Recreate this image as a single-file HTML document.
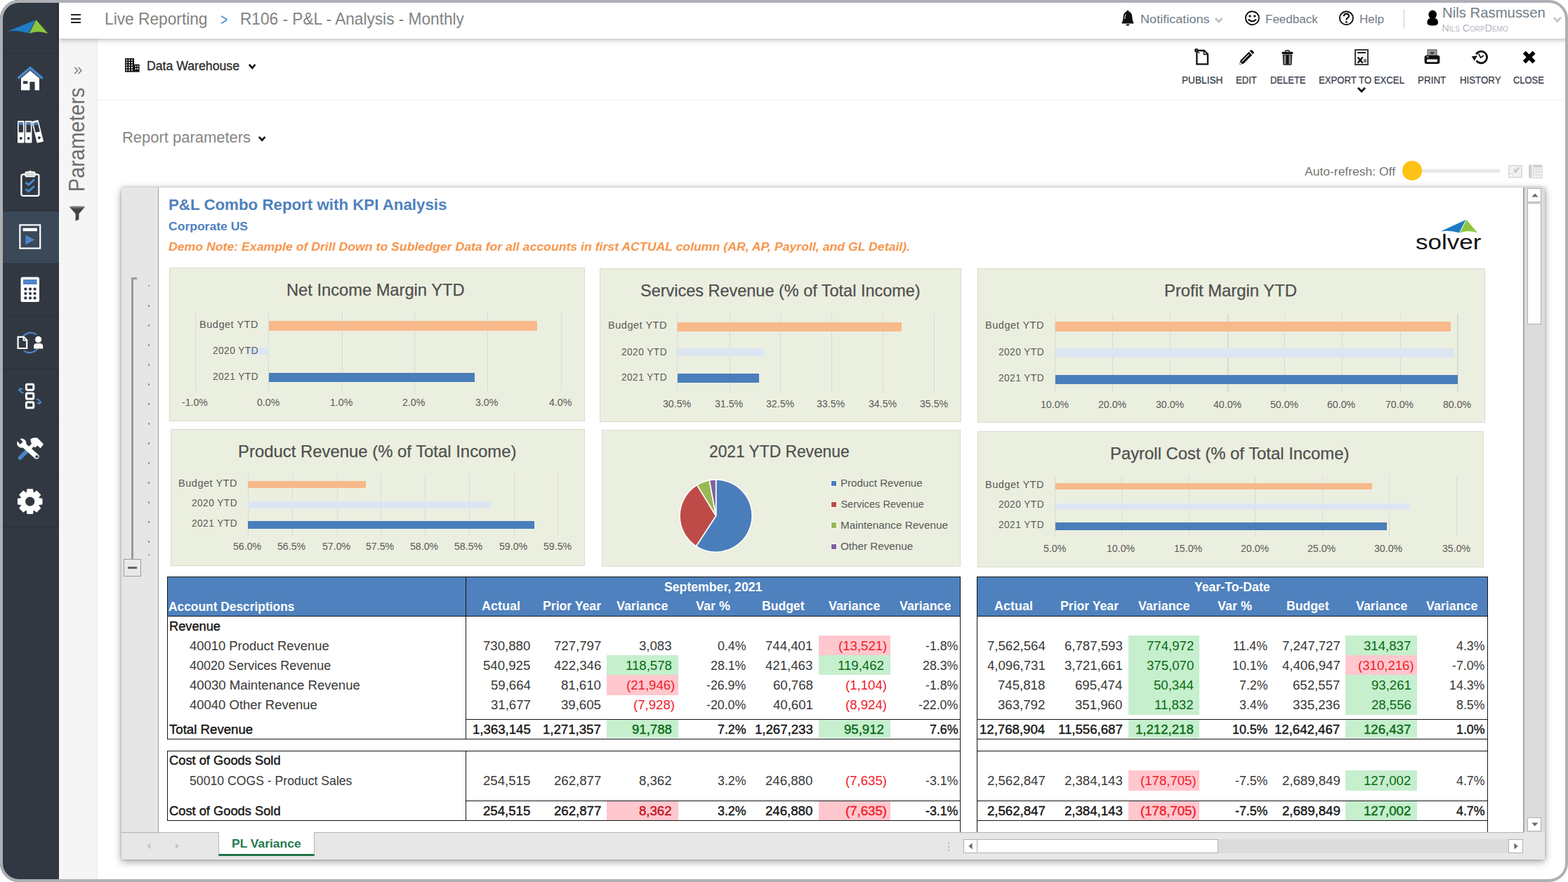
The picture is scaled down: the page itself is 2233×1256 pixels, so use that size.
<!DOCTYPE html>
<html lang="en"><head><meta charset="utf-8"><title>R106 - P&amp;L - Analysis - Monthly</title>
<style>
html,body{margin:0;padding:0;background:#fff;}
body{width:2233px;height:1256px;overflow:hidden;position:relative;font-family:"Liberation Sans", sans-serif;}
#f{position:absolute;left:0;top:0;width:2233px;height:1256px;box-sizing:border-box;border-radius:27px;overflow:hidden;background:#fff;}
#f div,#f span,#f svg{position:absolute;}
#f nav,#f aside,#f section,#f header,#f main{position:absolute;left:0;top:0;width:0;height:0;}
#f span{white-space:nowrap;line-height:1;transform-origin:0 50%;}
#fb{position:absolute;left:0;top:0;width:2233px;height:1256px;box-sizing:border-box;border:4px solid #aeb0b5;border-radius:27px;pointer-events:none;}
</style></head>
<body>
<div id="f">
<nav class="sidebar" aria-label="Main navigation">
<div style="left:0px;top:0px;width:84px;height:1256px;background:#313842;"></div>
<div style="left:4px;top:75px;width:80px;height:1px;background:#29303a;"></div>
<div style="left:4px;top:150px;width:80px;height:1px;background:#29303a;"></div>
<div style="left:4px;top:225px;width:80px;height:1px;background:#29303a;"></div>
<div style="left:4px;top:300px;width:80px;height:1px;background:#29303a;"></div>
<div style="left:4px;top:375px;width:80px;height:1px;background:#29303a;"></div>
<div style="left:4px;top:450px;width:80px;height:1px;background:#29303a;"></div>
<div style="left:4px;top:525px;width:80px;height:1px;background:#29303a;"></div>
<div style="left:4px;top:600px;width:80px;height:1px;background:#29303a;"></div>
<div style="left:4px;top:675px;width:80px;height:1px;background:#29303a;"></div>
<div style="left:4px;top:750px;width:80px;height:1px;background:#29303a;"></div>
<div style="left:4px;top:301px;width:80px;height:74px;background:#3b4858;"></div>
<svg style="left:8px;top:22px;" width="66" height="30" viewBox="0 0 66 30"><path d="M3 22.6 L42.6 6.4 L32.6 25.6 Q19 20.6 3 22.6Z" fill="#1f7bc4"/><path d="M43.4 6.2 L60.4 25.8 Q46 20.6 33.6 25.8Z" fill="#8cc63f"/></svg>
<svg style="left:22px;top:92px;" width="42" height="40" viewBox="0 0 42 40"><path d="M3.6 19.6 L21 4.6 L38.4 19.6" fill="none" stroke="#4a86c8" stroke-width="3.6" stroke-linejoin="miter"/><path d="M8 19.4 L21 8.4 L34 19.4 V36.6 H27.6 V24.6 H20.4 V36.6 H8Z" fill="#fff"/><rect x="11" y="23.4" width="6.4" height="4" fill="#313842"/></svg>
<svg style="left:22px;top:168px;" width="44" height="40" viewBox="0 0 44 40"><rect x="3" y="4" width="9.6" height="31.6" rx="1" fill="#fff"/><rect x="13.8" y="4" width="9.6" height="31.6" rx="1" fill="#fff"/><g transform="rotate(-14 32 20)"><rect x="27" y="3.4" width="9.6" height="31.6" rx="1" fill="#fff"/><rect x="28.6" y="6" width="6.4" height="14" fill="#313842"/><rect x="28.6" y="6" width="6.4" height="3.4" fill="#4a86c8"/><circle cx="31.8" cy="28.4" r="2" fill="#313842"/></g><rect x="4.6" y="6.4" width="6.4" height="14" fill="#313842"/><rect x="4.6" y="6.4" width="6.4" height="3.4" fill="#4a86c8"/><circle cx="7.8" cy="29" r="2" fill="#313842"/><rect x="15.4" y="6.4" width="6.4" height="14" fill="#313842"/><rect x="15.4" y="6.4" width="6.4" height="3.4" fill="#4a86c8"/><circle cx="18.6" cy="29" r="2" fill="#313842"/></svg>
<svg style="left:26px;top:240px;" width="34" height="42" viewBox="0 0 34 42"><rect x="4.4" y="8.4" width="25" height="30.4" rx="2.4" fill="none" stroke="#fff" stroke-width="2.2"/><rect x="10" y="4.6" width="14" height="7" rx="2.4" fill="#d9d9d9" stroke="#fff" stroke-width="1.4"/><circle cx="17" cy="4.6" r="1.8" fill="#fff"/><path d="M10.6 19.6 L14.6 23.2 L23 15.6 M10.6 29 L14.6 32.6 L23 25" fill="none" stroke="#4a86c8" stroke-width="3"/></svg>
<svg style="left:25px;top:317px;" width="36" height="40" viewBox="0 0 36 40"><rect x="3.4" y="3.4" width="28.8" height="33.2" fill="none" stroke="#fff" stroke-width="2.2"/><rect x="7.6" y="7.8" width="20.4" height="4.4" fill="#fff"/><path d="M11.4 17.4 L24.4 24.4 L11.4 31.4Z" fill="#4a86c8"/></svg>
<svg style="left:27px;top:392px;" width="32" height="40" viewBox="0 0 32 40"><rect x="2.6" y="2.4" width="26.4" height="35.6" rx="2.6" fill="#fff"/><rect x="6" y="6" width="19.6" height="7" fill="#4a86c8"/><circle cx="9.4" cy="19.6" r="2.1" fill="#313842"/><circle cx="9.4" cy="26" r="2.1" fill="#313842"/><circle cx="9.4" cy="32.4" r="2.1" fill="#313842"/><circle cx="16" cy="19.6" r="2.1" fill="#313842"/><circle cx="16" cy="26" r="2.1" fill="#313842"/><circle cx="16" cy="32.4" r="2.1" fill="#313842"/><circle cx="22.6" cy="19.6" r="2.1" fill="#313842"/><circle cx="22.6" cy="26" r="2.1" fill="#313842"/><circle cx="22.6" cy="32.4" r="2.1" fill="#313842"/></svg>
<svg style="left:21px;top:468px;" width="44" height="40" viewBox="0 0 44 40"><path d="M11.6 11.4 A14.2 14.2 0 0 1 31 8.4 M32.4 28.6 A14.2 14.2 0 0 1 13 31.6" fill="none" stroke="#4a86c8" stroke-width="2.3"/><path d="M4.6 11.8 H12.8 L17.2 16.2 V28 H4.6Z" fill="#313842" stroke="#fff" stroke-width="2.2"/><path d="M12.4 11.8 V16.6 H17.2" fill="none" stroke="#fff" stroke-width="1.6"/><circle cx="33.6" cy="15.4" r="4.6" fill="#fff"/><path d="M27 28.4 V25.4 Q27 21 31.4 21 H35.8 Q40.2 21 40.2 25.4 V28.4Z" fill="#fff"/></svg>
<svg style="left:23px;top:543px;" width="40" height="42" viewBox="0 0 40 42"><rect x="14.4" y="4.2" width="10.4" height="8" rx="1.6" fill="none" stroke="#fff" stroke-width="3"/><rect x="14.4" y="17" width="10.4" height="8" rx="1.6" fill="none" stroke="#fff" stroke-width="3"/><rect x="14.4" y="29.8" width="10.4" height="8" rx="1.6" fill="none" stroke="#fff" stroke-width="3"/><path d="M10.6 16.4 Q3.6 15.4 5.8 10.6 M3.4 13.4 L5.8 10.2 L9.4 11.6 M28.6 25.6 Q35.6 26.6 33.4 31.4 M35.8 28.6 L33.4 31.8 L29.8 30.4" fill="none" stroke="#4a86c8" stroke-width="2"/></svg>
<svg style="left:21px;top:618px;" width="44" height="40" viewBox="0 0 44 40"><path d="M7.6 34 L19 22.6" stroke="#4a86c8" stroke-width="5.6" stroke-linecap="round"/><path d="M20 21.6 L27 14.6" stroke="#fff" stroke-width="5"/><path d="M22.2 7.6 Q27 4.4 32.6 5.8 L41 14.6 L36.6 20.6 L32.6 16.4 L28.6 19.6 L23.4 12.8Z" fill="#fff"/><path d="M11.4 14.6 L31 32" stroke="#fff" stroke-width="7.2" stroke-linecap="round"/><circle cx="9.8" cy="13.2" r="6.6" fill="#fff"/><path d="M9.6 13 L2 4.4" stroke="#313842" stroke-width="5"/><circle cx="31.4" cy="32.2" r="2" fill="#313842"/></svg>
<svg style="left:22px;top:693px;" width="42" height="42" viewBox="0 0 42 42"><path d="M16.86 3.92 L24.54 3.92 L25.10 8.66 L26.39 9.19 L30.13 6.24 L35.56 11.67 L32.61 15.41 L33.14 16.70 L37.88 17.26 L37.88 24.94 L33.14 25.50 L32.61 26.79 L35.56 30.53 L30.13 35.96 L26.39 33.01 L25.10 33.54 L24.54 38.28 L16.86 38.28 L16.30 33.54 L15.01 33.01 L11.27 35.96 L5.84 30.53 L8.79 26.79 L8.26 25.50 L3.52 24.94 L3.52 17.26 L8.26 16.70 L8.79 15.41 L5.84 11.67 L11.27 6.24 L15.01 9.19 L16.30 8.66Z M27.90 21.10 A7.2 7.2 0 1 0 13.50 21.10 A7.2 7.2 0 1 0 27.90 21.10Z" fill="#fff" fill-rule="evenodd" stroke="#fff" stroke-width="1.2" stroke-linejoin="round"/></svg>
</nav>
<aside class="params-strip">
<div style="left:84px;top:55px;width:53.8px;height:1201px;background:#f5f5f5;border-right:1px solid #ebebeb;"></div>
<svg style="left:104px;top:94px;" width="15" height="13" viewBox="0 0 15 13"><path d="M2.2 1.8 L6.6 6.4 L2.2 11 M7.6 1.8 L12 6.4 L7.6 11" stroke="#7a7a7a" stroke-width="1.5" fill="none"/></svg>
<svg style="left:96px;top:291px;" width="28" height="26" viewBox="0 0 28 26"><path d="M2.8 3.4 H25 L16.4 13.4 V21.6 L11.6 23.8 V13.4Z" fill="#444"/><ellipse cx="13.9" cy="4" rx="10.6" ry="1.6" fill="#777"/></svg>
<span style="left:119.80px;top:247.30px;transform-origin:0 25.90px;transform:rotate(-90deg) scaleX(0.937);font-size:30.6px;color:#6e6e6e;">Parameters</span>
</aside>
<section class="toolbar">
<div style="left:139px;top:142px;width:2094px;height:1px;background:#f0f0f0;"></div>
<span style="left:209.00px;top:84.56px;font-size:18px;color:#2b2b2b;-webkit-text-stroke:0.3px #2b2b2b;transform:scaleX(0.982);">Data Warehouse</span>
<span style="left:173.60px;top:185.35px;font-size:22.5px;color:#858585;transform:scaleX(0.976);">Report parameters</span>
<span style="left:1857.80px;top:235.57px;font-size:17.4px;color:#747474;transform:scaleX(1.006);">Auto-refresh: Off</span>
<div style="left:2011px;top:240.8px;width:126px;height:5px;background:#e8e8e8;border-radius:3px;"></div>
<div style="left:1997.4px;top:229.2px;width:27.6px;height:27.6px;background:#fdc214;border-radius:50%;"></div>
<span style="left:1683.00px;top:106.73px;font-size:14.5px;color:#363d49;-webkit-text-stroke:0.25px #363d49;transform:scaleX(0.941);">PUBLISH</span>
<span style="left:1759.80px;top:106.73px;font-size:14.5px;color:#363d49;-webkit-text-stroke:0.25px #363d49;transform:scaleX(0.902);">EDIT</span>
<span style="left:1808.70px;top:106.73px;font-size:14.5px;color:#363d49;-webkit-text-stroke:0.25px #363d49;transform:scaleX(0.895);">DELETE</span>
<span style="left:1878.20px;top:106.73px;font-size:14.5px;color:#363d49;-webkit-text-stroke:0.25px #363d49;transform:scaleX(0.908);">EXPORT TO EXCEL</span>
<span style="left:2019.20px;top:106.73px;font-size:14.5px;color:#363d49;-webkit-text-stroke:0.25px #363d49;transform:scaleX(0.926);">PRINT</span>
<span style="left:2078.50px;top:106.73px;font-size:14.5px;color:#363d49;-webkit-text-stroke:0.25px #363d49;transform:scaleX(0.915);">HISTORY</span>
<span style="left:2155.40px;top:106.73px;font-size:14.5px;color:#363d49;-webkit-text-stroke:0.25px #363d49;transform:scaleX(0.893);">CLOSE</span>
<svg style="left:1700px;top:68px;" width="24" height="27" viewBox="0 0 24 27"><path d="M4.4 4 H14.8 L20 9.2 V23.4 H4.4Z" fill="#fff" stroke="#111" stroke-width="2.3" stroke-linejoin="miter"/><path d="M14.4 4 V9.4 H19.8" fill="none" stroke="#111" stroke-width="1.5"/><circle cx="3.8" cy="3.8" r="2.1" fill="#555" stroke="#111" stroke-width="1.4"/><path d="M5 4.8 L8.2 8" stroke="#111" stroke-width="1.2"/></svg>
<svg style="left:1762px;top:69px;" width="25" height="25" viewBox="0 0 25 25"><path d="M3 23 L4.6 16.8 L16.6 4.8 L21.2 9.4 L9.2 21.4Z" fill="#111"/><path d="M17.6 3.8 L19 2.4 Q20 1.6 21 2.4 L23.4 4.8 Q24.2 5.8 23.4 6.8 L22.2 8.2Z" fill="#111"/><path d="M6.6 18.6 L16.8 8.4" stroke="#fff" stroke-width="1.1"/><path d="M3.4 22.6 L4.4 19.4 L6.6 21.6Z" fill="#fff"/></svg>
<svg style="left:1823px;top:70px;" width="21" height="25" viewBox="0 0 21 25"><path d="M7.4 3.8 Q7.4 1.8 10.4 1.8 Q13.4 1.8 13.4 3.8" fill="none" stroke="#111" stroke-width="1.5"/><rect x="2.4" y="3.8" width="16" height="3.2" rx="1.4" fill="#111"/><path d="M3.6 7.6 H17.2 L16.6 21.4 Q16.4 22.8 15 22.8 H5.8 Q4.4 22.8 4.2 21.4Z" fill="#2a2a2a"/><rect x="5.6" y="8.6" width="2.6" height="12.6" fill="#8d8d8d"/><rect x="9.1" y="8.6" width="2.6" height="12.6" fill="#111"/><rect x="12.6" y="8.6" width="2.6" height="12.6" fill="#8d8d8d"/></svg>
<div style="left:1929px;top:70.4px;width:20px;height:22.4px;box-sizing:border-box;border:2.3px solid #3c3c3c;background:#f1f1f1"></div>
<div style="left:1932.8px;top:74.2px;width:12.4px;height:1.9px;background:#222;"></div>
<svg style="left:1932px;top:80px;" width="11" height="11" viewBox="0 0 11 11"><path d="M1.6 1.6 L8.6 9.8 M8.6 1.6 L1.6 9.8" stroke="#111" stroke-width="2.3" fill="none"/></svg>
<div style="left:1942px;top:83.6px;width:4.2px;height:5.4px;background:#777;border-radius:1px;"></div>
<svg style="left:1931.2px;top:122.4px;" width="16" height="11.6" viewBox="-8 -5.8 16 11.6"><path d="M-5.02 -2.82 L0 2.4 L5.02 -2.82" fill="none" stroke="#111" stroke-width="2.8"/></svg>
<svg style="left:2026px;top:68px;" width="27" height="26" viewBox="0 0 27 26"><rect x="7" y="2.8" width="13" height="9" fill="#9a9a9a" stroke="#555" stroke-width="1"/><rect x="11" y="6" width="5" height="3" fill="#444"/><rect x="2.6" y="10.8" width="21.8" height="12.2" rx="3" fill="#111"/><rect x="5.4" y="12.4" width="3.4" height="1.2" rx=".6" fill="#fff"/><rect x="6" y="16.6" width="15" height="3.6" rx=".6" fill="#fff"/></svg>
<svg style="left:2093px;top:69px;" width="28" height="25" viewBox="0 0 28 25"><path d="M9.2 8.2 A8.3 8.3 0 1 1 9.6 17.4" fill="none" stroke="#111" stroke-width="2.8"/><path d="M2.8 11.2 L11 10.2 L6.6 17.8Z" fill="#111"/><path d="M12.6 7.4 L15.6 13 L20 10" fill="none" stroke="#111" stroke-width="1.6"/></svg>
<svg style="left:2165px;top:69px;" width="25" height="25" viewBox="0 0 25 25"><path d="M5.8 5.6 L19.6 19.4 M19.6 5.6 L5.8 19.4" stroke="#000" stroke-width="5.6"/></svg>
<svg style="left:176.8px;top:82.4px;" width="23" height="22" viewBox="0 0 23 22"><rect x="1" y="1" width="13" height="19.6" fill="#111"/><rect x="14" y="9.6" width="7.6" height="11" fill="#111"/><rect x="2.6" y="2.6" width="1.7" height="2" fill="#fff"/><rect x="2.6" y="6.1" width="1.7" height="2" fill="#fff"/><rect x="2.6" y="9.6" width="1.7" height="2" fill="#fff"/><rect x="2.6" y="13.1" width="1.7" height="2" fill="#fff"/><rect x="2.6" y="16.6" width="1.7" height="2" fill="#fff"/><rect x="6.3" y="2.6" width="1.7" height="2" fill="#fff"/><rect x="6.3" y="6.1" width="1.7" height="2" fill="#fff"/><rect x="6.3" y="9.6" width="1.7" height="2" fill="#fff"/><rect x="6.3" y="13.1" width="1.7" height="2" fill="#fff"/><rect x="6.3" y="16.6" width="1.7" height="2" fill="#fff"/><rect x="10" y="2.6" width="1.7" height="2" fill="#fff"/><rect x="10" y="6.1" width="1.7" height="2" fill="#fff"/><rect x="10" y="9.6" width="1.7" height="2" fill="#fff"/><rect x="10" y="13.1" width="1.7" height="2" fill="#fff"/><rect x="10" y="16.6" width="1.7" height="2" fill="#fff"/><rect x="15.6" y="11.4" width="1.5" height="2" fill="#fff"/><rect x="15.6" y="15" width="1.5" height="2" fill="#fff"/><rect x="18.6" y="11.4" width="1.5" height="2" fill="#fff"/><rect x="18.6" y="15" width="1.5" height="2" fill="#fff"/></svg>
<svg style="left:352.2px;top:89.2px;" width="14.4" height="11.2" viewBox="-7.2 -5.6 14.4 11.2"><path d="M-4.29 -2.69 L0 2.3 L4.29 -2.69" fill="none" stroke="#111" stroke-width="2.6"/></svg>
<svg style="left:366.2px;top:192.3px;" width="14.4" height="11" viewBox="-7.2 -5.5 14.4 11"><path d="M-4.29 -2.59 L0 2.2 L4.29 -2.59" fill="none" stroke="#111" stroke-width="2.6"/></svg>
<svg style="left:2147px;top:233px;" width="22" height="22" viewBox="0 0 22 22"><rect x="2" y="3" width="18" height="16.6" fill="#f2f2f2" stroke="#d6d6d6" stroke-width="1.6"/><path d="M16.6 5.6 L11 11.2" fill="none" stroke="#c9c9c9" stroke-width="2.4"/><path d="M9 6.6 L14.8 12.4 L9 13Z" fill="#c9c9c9"/><rect x="2.4" y="14.6" width="4.6" height="4.6" fill="#fff" stroke="#d6d6d6" stroke-width="1"/></svg>
<svg style="left:2176.4px;top:232.6px;" width="22" height="22" viewBox="0 0 22 22"><rect x="1" y="1.6" width="4.6" height="19" fill="#d0d0d0"/><rect x="7" y="1.6" width="13.4" height="4.2" fill="#d0d0d0"/><rect x="7.6" y="7.6" width="12.4" height="12.6" fill="none" stroke="#d0d0d0" stroke-width="1.2"/><path d="M11.8 7.6 V20.2 M15.9 7.6 V20.2 M7.6 11.8 H20 M7.6 16 H20" stroke="#d0d0d0" stroke-width="1.1"/></svg>
</section>
<header class="topbar">
<div style="left:84px;top:0px;width:2149px;height:55px;background:#fff;box-shadow:0 2px 7px rgba(0,0,0,.27);"></div>
<div style="left:101px;top:20px;width:14px;height:2.2px;background:#222;"></div>
<div style="left:101px;top:25.5px;width:14px;height:2.2px;background:#222;"></div>
<div style="left:101px;top:31px;width:14px;height:2.2px;background:#222;"></div>
<span style="left:149.30px;top:16.12px;font-size:23.6px;color:#828282;transform:scaleX(0.963);">Live Reporting</span>
<span style="left:313.50px;top:16.53px;font-size:23px;color:#4a8ad4;transform:scaleX(0.744);">&gt;</span>
<span style="left:341.60px;top:16.12px;font-size:23.6px;color:#828282;transform:scaleX(0.960);">R106 - P&amp;L - Analysis - Monthly</span>
<span style="left:1624.30px;top:18.87px;font-size:17.4px;color:#707b87;transform:scaleX(1.041);">Notifications</span>
<span style="left:1801.80px;top:18.87px;font-size:17.4px;color:#707b87;transform:scaleX(0.979);">Feedback</span>
<span style="left:1935.70px;top:18.87px;font-size:17.4px;color:#707b87;transform:scaleX(0.978);">Help</span>
<div style="left:1999px;top:13px;width:1.3px;height:28px;background:#cfcfcf;"></div>
<span style="left:2053.60px;top:7.42px;font-size:21px;color:#707b87;transform:scaleX(0.968);">Nils Rasmussen</span>
<span style="left:2053.60px;top:32.78px;font-size:14.2px;color:#b4b9bf;font-variant:small-caps;">Nils CorpDemo</span>
<svg style="left:1595px;top:13px;" width="22" height="26" viewBox="0 0 22 26"><path d="M11 1.6 Q12.6 1.6 12.6 3.4 Q17.2 5 17.4 11 Q17.6 16.6 19.4 19.2 V20.4 H2.6 V19.2 Q4.4 16.6 4.6 11 Q4.8 5 9.4 3.4 Q9.4 1.6 11 1.6Z" fill="#111"/><path d="M8.4 21.4 H13.6 Q13.4 23.8 11 23.8 Q8.6 23.8 8.4 21.4Z" fill="#111"/><path d="M8.2 7.4 Q6.8 10 6.8 14" fill="none" stroke="#fff" stroke-width="1"/></svg>
<svg style="left:1728.3px;top:23.3px;" width="15.4" height="11.4" viewBox="-7.7 -5.7 15.4 11.4"><path d="M-4.79 -2.79 L0 2.4 L4.79 -2.79" fill="none" stroke="#bdbdbd" stroke-width="2.6"/></svg>
<svg style="left:1771px;top:13px;" width="25" height="26" viewBox="0 0 25 26"><circle cx="12.4" cy="12.7" r="9.5" fill="none" stroke="#111" stroke-width="1.9"/><circle cx="9" cy="9.9" r="1.7" fill="#111"/><circle cx="15.8" cy="9.9" r="1.7" fill="#111"/><path d="M6.8 14.4 Q12.4 20.4 18 14.4" fill="none" stroke="#111" stroke-width="2.2"/></svg>
<svg style="left:1905px;top:13px;" width="25" height="26" viewBox="0 0 25 26"><circle cx="12.4" cy="12.7" r="9.5" fill="none" stroke="#111" stroke-width="1.9"/><path d="M8.8 10.2 Q8.8 6.6 12.4 6.6 Q16 6.6 16 9.8 Q16 11.8 13.8 12.8 Q12.4 13.6 12.4 15.4" fill="none" stroke="#111" stroke-width="2.2"/><circle cx="12.4" cy="18.4" r="1.4" fill="#111"/></svg>
<svg style="left:2030px;top:13px;" width="20" height="26" viewBox="0 0 20 26"><ellipse cx="10.2" cy="7.8" rx="5.8" ry="6.2" fill="#000"/><path d="M2.4 19.4 Q2.4 13.4 7.4 13 Q10.2 14.6 13 13 Q18 13.4 18 19.4 Q18 23.4 10.2 23.4 Q2.4 23.4 2.4 19.4Z" fill="#000"/></svg>
<svg style="left:2209.5px;top:22px;" width="15.8" height="11.6" viewBox="-7.9 -5.8 15.8 11.6"><path d="M-4.99 -2.89 L0 2.5 L4.99 -2.89" fill="none" stroke="#c2c2c2" stroke-width="2.6"/></svg>
</header>
<main class="sheet">
<section class="sheet-frame">
<div style="left:172.6px;top:267.4px;width:2027.3px;height:956.4px;background:#fff;box-shadow:0 3px 11px rgba(0,0,0,.36),0 0 4px rgba(0,0,0,.2);"></div>
<div style="left:172.6px;top:267.4px;width:52.1px;height:917.8px;background:#e6e6e6;"></div>
<div style="left:224.7px;top:267.4px;width:1.5px;height:917.8px;background:#9c9c9c;"></div>
<div style="left:187.1px;top:395px;width:2.7px;height:402.5px;background:#9a9a9a;"></div>
<div style="left:187.1px;top:395px;width:8.4px;height:3.2px;background:#9a9a9a;"></div>
<div style="left:210.6px;top:405.7px;width:2.8px;height:2.8px;background:#858585;border-radius:1px;"></div>
<div style="left:210.6px;top:433.73px;width:2.8px;height:2.8px;background:#858585;border-radius:1px;"></div>
<div style="left:210.6px;top:461.76px;width:2.8px;height:2.8px;background:#858585;border-radius:1px;"></div>
<div style="left:210.6px;top:489.79px;width:2.8px;height:2.8px;background:#858585;border-radius:1px;"></div>
<div style="left:210.6px;top:517.82px;width:2.8px;height:2.8px;background:#858585;border-radius:1px;"></div>
<div style="left:210.6px;top:545.85px;width:2.8px;height:2.8px;background:#858585;border-radius:1px;"></div>
<div style="left:210.6px;top:573.88px;width:2.8px;height:2.8px;background:#858585;border-radius:1px;"></div>
<div style="left:210.6px;top:601.91px;width:2.8px;height:2.8px;background:#858585;border-radius:1px;"></div>
<div style="left:210.6px;top:629.94px;width:2.8px;height:2.8px;background:#858585;border-radius:1px;"></div>
<div style="left:210.6px;top:657.97px;width:2.8px;height:2.8px;background:#858585;border-radius:1px;"></div>
<div style="left:210.6px;top:686px;width:2.8px;height:2.8px;background:#858585;border-radius:1px;"></div>
<div style="left:210.6px;top:714.03px;width:2.8px;height:2.8px;background:#858585;border-radius:1px;"></div>
<div style="left:210.6px;top:742.06px;width:2.8px;height:2.8px;background:#858585;border-radius:1px;"></div>
<div style="left:210.6px;top:770.09px;width:2.8px;height:2.8px;background:#858585;border-radius:1px;"></div>
<div style="left:210.6px;top:788.6px;width:2.8px;height:2.8px;background:#858585;border-radius:1px;"></div>
<div style="left:176.2px;top:796.2px;width:24.6px;height:24.4px;background:#e9e9e9;box-sizing:border-box;border:1.3px solid #9c9c9c;"></div>
<div style="left:182.2px;top:807.2px;width:12.6px;height:3px;background:#666;"></div>
</section>
<section class="report-heading">
<span style="left:239.60px;top:280.95px;font-size:21.8px;color:#4e81bd;font-weight:700;transform:scaleX(1.023);">P&amp;L Combo Report with KPI Analysis</span>
<span style="left:239.60px;top:315.18px;font-size:16.8px;color:#4e81bd;font-weight:700;transform:scaleX(1.045);">Corporate US</span>
<span style="left:239.60px;top:343.44px;font-size:17.2px;color:#f7964c;font-weight:700;font-style:italic;transform:scaleX(1.028);">Demo Note: Example of Drill Down to Subledger Data for all accounts in first ACTUAL column (AR, AP, Payroll, and GL Detail).</span>
<span style="left:2015.80px;top:329.91px;font-size:30px;color:#111;transform:scaleX(1.167);">solver</span>
<svg style="left:2048px;top:310px" width="60" height="24" viewBox="0 0 60 24"><path d="M3.5 19.5 L39.5 3 L30 21.5 Q17 17.5 3.5 19.5Z" fill="#1f7bc4"/><path d="M40.5 3 L56 21.5 Q43 17 31 21.5Z" fill="#8cc63f"/></svg>
</section>
<section class="kpi-charts">
<div style="left:241.3px;top:381px;width:591.5px;height:219px;background:#ebefdf;box-sizing:border-box;border:1.5px solid #d8dccd;"></div>
<span style="left:408.00px;top:402.16px;font-size:23.2px;color:#505050;-webkit-text-stroke:0.25px #505050;transform:scaleX(1.021);">Net Income Margin YTD</span>
<div style="left:277.9px;top:444.3px;width:1.2px;height:113.2px;background:#d8dbd1;"></div>
<div style="left:382.3px;top:444.3px;width:1.2px;height:113.2px;background:#d8dbd1;"></div>
<div style="left:486.5px;top:444.3px;width:1.2px;height:113.2px;background:#d8dbd1;"></div>
<div style="left:589.9px;top:444.3px;width:1.2px;height:113.2px;background:#d8dbd1;"></div>
<div style="left:693.8px;top:444.3px;width:1.2px;height:113.2px;background:#d8dbd1;"></div>
<div style="left:798.6px;top:444.3px;width:1.2px;height:113.2px;background:#d8dbd1;"></div>
<div style="left:383px;top:457px;width:382px;height:13.7px;background:#f8b98b;"></div>
<div style="left:352px;top:494.5px;width:31px;height:10.5px;background:#dce6f2;"></div>
<div style="left:383px;top:530.9px;width:293px;height:13.3px;background:#4a7ebb;"></div>
<span style="left:283.50px;top:455.11px;font-size:14.4px;color:#595959;letter-spacing:0.5px;transform:scaleX(1.010);">Budget YTD</span>
<span style="left:302.50px;top:492.41px;font-size:14.4px;color:#595959;letter-spacing:0.5px;transform:scaleX(0.948);">2020 YTD</span>
<span style="left:302.50px;top:528.61px;font-size:14.4px;color:#595959;letter-spacing:0.5px;transform:scaleX(0.948);">2021 YTD</span>
<span style="left:259.05px;top:565.33px;font-size:15.2px;color:#595959;transform:scaleX(0.930);">-1.0%</span>
<span style="left:365.80px;top:565.33px;font-size:15.2px;color:#595959;transform:scaleX(0.930);">0.0%</span>
<span style="left:470.00px;top:565.33px;font-size:15.2px;color:#595959;transform:scaleX(0.930);">1.0%</span>
<span style="left:573.40px;top:565.33px;font-size:15.2px;color:#595959;transform:scaleX(0.930);">2.0%</span>
<span style="left:677.30px;top:565.33px;font-size:15.2px;color:#595959;transform:scaleX(0.930);">3.0%</span>
<span style="left:782.10px;top:565.33px;font-size:15.2px;color:#595959;transform:scaleX(0.930);">4.0%</span>
<div style="left:853.9px;top:381.9px;width:514.8px;height:218.9px;background:#ebefdf;box-sizing:border-box;border:1.5px solid #d8dccd;"></div>
<span style="left:912.00px;top:403.06px;font-size:23.2px;color:#505050;-webkit-text-stroke:0.25px #505050;transform:scaleX(1.012);">Services Revenue (% of Total Income)</span>
<div style="left:964px;top:447.2px;width:1.2px;height:111.4px;background:#d8dbd1;"></div>
<div style="left:1038.8px;top:447.2px;width:1.2px;height:111.4px;background:#d8dbd1;"></div>
<div style="left:1111px;top:447.2px;width:1.2px;height:111.4px;background:#d8dbd1;"></div>
<div style="left:1183.7px;top:447.2px;width:1.2px;height:111.4px;background:#d8dbd1;"></div>
<div style="left:1257px;top:447.2px;width:1.2px;height:111.4px;background:#d8dbd1;"></div>
<div style="left:1330.2px;top:447.2px;width:1.2px;height:111.4px;background:#d8dbd1;"></div>
<div style="left:965.4px;top:459px;width:318.6px;height:13.3px;background:#f8b98b;"></div>
<div style="left:965.4px;top:496.1px;width:124.1px;height:11.3px;background:#dce6f2;"></div>
<div style="left:965.4px;top:532.3px;width:115.9px;height:13.2px;background:#4a7ebb;"></div>
<span style="left:865.60px;top:456.41px;font-size:14.4px;color:#595959;letter-spacing:0.5px;transform:scaleX(1.010);">Budget YTD</span>
<span style="left:884.60px;top:494.01px;font-size:14.4px;color:#595959;letter-spacing:0.5px;transform:scaleX(0.948);">2020 YTD</span>
<span style="left:884.60px;top:530.31px;font-size:14.4px;color:#595959;letter-spacing:0.5px;transform:scaleX(0.948);">2021 YTD</span>
<span style="left:943.57px;top:566.73px;font-size:15.2px;color:#595959;transform:scaleX(0.930);">30.5%</span>
<span style="left:1018.37px;top:566.73px;font-size:15.2px;color:#595959;transform:scaleX(0.930);">31.5%</span>
<span style="left:1090.57px;top:566.73px;font-size:15.2px;color:#595959;transform:scaleX(0.930);">32.5%</span>
<span style="left:1163.27px;top:566.73px;font-size:15.2px;color:#595959;transform:scaleX(0.930);">33.5%</span>
<span style="left:1236.57px;top:566.73px;font-size:15.2px;color:#595959;transform:scaleX(0.930);">34.5%</span>
<span style="left:1309.77px;top:566.73px;font-size:15.2px;color:#595959;transform:scaleX(0.930);">35.5%</span>
<div style="left:1392.2px;top:382.2px;width:722.7px;height:220px;background:#ebefdf;box-sizing:border-box;border:1.5px solid #d8dccd;"></div>
<span style="left:1658.00px;top:403.16px;font-size:23.2px;color:#505050;-webkit-text-stroke:0.25px #505050;transform:scaleX(1.028);">Profit Margin YTD</span>
<div style="left:1502px;top:446.5px;width:1.2px;height:112.7px;background:#d8dbd1;"></div>
<div style="left:1584.1px;top:446.5px;width:1.2px;height:112.7px;background:#d8dbd1;"></div>
<div style="left:1666.3px;top:446.5px;width:1.2px;height:112.7px;background:#d8dbd1;"></div>
<div style="left:1748.4px;top:446.5px;width:1.2px;height:112.7px;background:#d8dbd1;"></div>
<div style="left:1829px;top:446.5px;width:1.2px;height:112.7px;background:#d8dbd1;"></div>
<div style="left:1910.7px;top:446.5px;width:1.2px;height:112.7px;background:#d8dbd1;"></div>
<div style="left:1993.6px;top:446.5px;width:1.2px;height:112.7px;background:#d8dbd1;"></div>
<div style="left:2075.4px;top:446.5px;width:1.2px;height:112.7px;background:#d8dbd1;"></div>
<div style="left:1502.6px;top:458.3px;width:563px;height:13.4px;background:#f8b98b;"></div>
<div style="left:1502.6px;top:496.1px;width:568.8px;height:13.4px;background:#dce6f2;"></div>
<div style="left:1502.6px;top:533.6px;width:573.4px;height:13.4px;background:#4a7ebb;"></div>
<span style="left:1403.00px;top:456.41px;font-size:14.4px;color:#595959;letter-spacing:0.5px;transform:scaleX(1.010);">Budget YTD</span>
<span style="left:1422.00px;top:493.51px;font-size:14.4px;color:#595959;letter-spacing:0.5px;transform:scaleX(0.948);">2020 YTD</span>
<span style="left:1422.00px;top:530.91px;font-size:14.4px;color:#595959;letter-spacing:0.5px;transform:scaleX(0.948);">2021 YTD</span>
<span style="left:1481.57px;top:567.53px;font-size:15.2px;color:#595959;transform:scaleX(0.930);">10.0%</span>
<span style="left:1563.67px;top:567.53px;font-size:15.2px;color:#595959;transform:scaleX(0.930);">20.0%</span>
<span style="left:1645.87px;top:567.53px;font-size:15.2px;color:#595959;transform:scaleX(0.930);">30.0%</span>
<span style="left:1727.97px;top:567.53px;font-size:15.2px;color:#595959;transform:scaleX(0.930);">40.0%</span>
<span style="left:1808.57px;top:567.53px;font-size:15.2px;color:#595959;transform:scaleX(0.930);">50.0%</span>
<span style="left:1890.27px;top:567.53px;font-size:15.2px;color:#595959;transform:scaleX(0.930);">60.0%</span>
<span style="left:1973.17px;top:567.53px;font-size:15.2px;color:#595959;transform:scaleX(0.930);">70.0%</span>
<span style="left:2054.97px;top:567.53px;font-size:15.2px;color:#595959;transform:scaleX(0.930);">80.0%</span>
<div style="left:243.1px;top:611.3px;width:589.9px;height:194.4px;background:#ebefdf;box-sizing:border-box;border:1.5px solid #d8dccd;"></div>
<span style="left:338.70px;top:632.06px;font-size:23.2px;color:#505050;-webkit-text-stroke:0.25px #505050;transform:scaleX(1.030);">Product Revenue (% of Total Income)</span>
<div style="left:352.8px;top:675.2px;width:1.2px;height:87.8px;background:#d8dbd1;"></div>
<div style="left:415.8px;top:675.2px;width:1.2px;height:87.8px;background:#d8dbd1;"></div>
<div style="left:479.8px;top:675.2px;width:1.2px;height:87.8px;background:#d8dbd1;"></div>
<div style="left:541.8px;top:675.2px;width:1.2px;height:87.8px;background:#d8dbd1;"></div>
<div style="left:604.9px;top:675.2px;width:1.2px;height:87.8px;background:#d8dbd1;"></div>
<div style="left:667.9px;top:675.2px;width:1.2px;height:87.8px;background:#d8dbd1;"></div>
<div style="left:731.5px;top:675.2px;width:1.2px;height:87.8px;background:#d8dbd1;"></div>
<div style="left:794.2px;top:675.2px;width:1.2px;height:87.8px;background:#d8dbd1;"></div>
<div style="left:353.4px;top:684.6px;width:168px;height:10.1px;background:#f8b98b;"></div>
<div style="left:353.4px;top:714.4px;width:345.2px;height:9.4px;background:#dce6f2;"></div>
<div style="left:353.4px;top:741.7px;width:407.5px;height:11px;background:#4a7ebb;"></div>
<span style="left:253.70px;top:681.21px;font-size:14.4px;color:#595959;letter-spacing:0.5px;transform:scaleX(1.010);">Budget YTD</span>
<span style="left:272.70px;top:709.11px;font-size:14.4px;color:#595959;letter-spacing:0.5px;transform:scaleX(0.948);">2020 YTD</span>
<span style="left:272.70px;top:738.31px;font-size:14.4px;color:#595959;letter-spacing:0.5px;transform:scaleX(0.948);">2021 YTD</span>
<span style="left:332.37px;top:770.13px;font-size:15.2px;color:#595959;transform:scaleX(0.930);">56.0%</span>
<span style="left:395.37px;top:770.13px;font-size:15.2px;color:#595959;transform:scaleX(0.930);">56.5%</span>
<span style="left:459.37px;top:770.13px;font-size:15.2px;color:#595959;transform:scaleX(0.930);">57.0%</span>
<span style="left:521.37px;top:770.13px;font-size:15.2px;color:#595959;transform:scaleX(0.930);">57.5%</span>
<span style="left:584.47px;top:770.13px;font-size:15.2px;color:#595959;transform:scaleX(0.930);">58.0%</span>
<span style="left:647.47px;top:770.13px;font-size:15.2px;color:#595959;transform:scaleX(0.930);">58.5%</span>
<span style="left:711.07px;top:770.13px;font-size:15.2px;color:#595959;transform:scaleX(0.930);">59.0%</span>
<span style="left:773.77px;top:770.13px;font-size:15.2px;color:#595959;transform:scaleX(0.930);">59.5%</span>
<div style="left:1392.2px;top:613.7px;width:720.6px;height:194.3px;background:#ebefdf;box-sizing:border-box;border:1.5px solid #d8dccd;"></div>
<span style="left:1581.30px;top:634.96px;font-size:23.2px;color:#505050;-webkit-text-stroke:0.25px #505050;transform:scaleX(1.029);">Payroll Cost (% of Total Income)</span>
<div style="left:1502px;top:679px;width:1.2px;height:86px;background:#d8dbd1;"></div>
<div style="left:1596.7px;top:679px;width:1.2px;height:86px;background:#d8dbd1;"></div>
<div style="left:1692.6px;top:679px;width:1.2px;height:86px;background:#d8dbd1;"></div>
<div style="left:1787px;top:679px;width:1.2px;height:86px;background:#d8dbd1;"></div>
<div style="left:1882.8px;top:679px;width:1.2px;height:86px;background:#d8dbd1;"></div>
<div style="left:1977.9px;top:679px;width:1.2px;height:86px;background:#d8dbd1;"></div>
<div style="left:2074.2px;top:679px;width:1.2px;height:86px;background:#d8dbd1;"></div>
<div style="left:1502.6px;top:687.9px;width:451.5px;height:9.5px;background:#f8b98b;"></div>
<div style="left:1502.6px;top:717.3px;width:505.7px;height:8.7px;background:#dce6f2;"></div>
<div style="left:1502.6px;top:744.4px;width:472.5px;height:11.1px;background:#4a7ebb;"></div>
<span style="left:1403.00px;top:683.31px;font-size:14.4px;color:#595959;letter-spacing:0.5px;transform:scaleX(1.010);">Budget YTD</span>
<span style="left:1422.00px;top:711.21px;font-size:14.4px;color:#595959;letter-spacing:0.5px;transform:scaleX(0.948);">2020 YTD</span>
<span style="left:1422.00px;top:739.81px;font-size:14.4px;color:#595959;letter-spacing:0.5px;transform:scaleX(0.948);">2021 YTD</span>
<span style="left:1485.50px;top:773.33px;font-size:15.2px;color:#595959;transform:scaleX(0.930);">5.0%</span>
<span style="left:1576.27px;top:773.33px;font-size:15.2px;color:#595959;transform:scaleX(0.930);">10.0%</span>
<span style="left:1672.17px;top:773.33px;font-size:15.2px;color:#595959;transform:scaleX(0.930);">15.0%</span>
<span style="left:1766.57px;top:773.33px;font-size:15.2px;color:#595959;transform:scaleX(0.930);">20.0%</span>
<span style="left:1862.37px;top:773.33px;font-size:15.2px;color:#595959;transform:scaleX(0.930);">25.0%</span>
<span style="left:1957.47px;top:773.33px;font-size:15.2px;color:#595959;transform:scaleX(0.930);">30.0%</span>
<span style="left:2053.77px;top:773.33px;font-size:15.2px;color:#595959;transform:scaleX(0.930);">35.0%</span>
<div style="left:857px;top:611.8px;width:511px;height:195.2px;background:#ebefdf;box-sizing:border-box;border:1.5px solid #d8dccd;"></div>
<span style="left:1010.45px;top:632.26px;font-size:23.2px;color:#505050;-webkit-text-stroke:0.25px #505050;transform:scaleX(0.982);">2021 YTD Revenue</span>
<svg style="left:964.7px;top:679.6px" width="109.2" height="109.2" viewBox="-54.6 -54.6 109.2 109.2"><path d="M0 0 L0.00 -51.60 A51.6 51.6 0 1 1 -28.19 43.22Z" fill="#4a7ebb" stroke="#fff" stroke-width="1.6" stroke-linejoin="round"/><path d="M0 0 L-28.19 43.22 A51.6 51.6 0 0 1 -26.88 -44.05Z" fill="#be4b48" stroke="#fff" stroke-width="1.6" stroke-linejoin="round"/><path d="M0 0 L-26.88 -44.05 A51.6 51.6 0 0 1 -9.29 -50.76Z" fill="#98b954" stroke="#fff" stroke-width="1.6" stroke-linejoin="round"/><path d="M0 0 L-9.29 -50.76 A51.6 51.6 0 0 1 -0.00 -51.60Z" fill="#7d60a0" stroke="#fff" stroke-width="1.6" stroke-linejoin="round"/></svg>
<div style="left:1183.6px;top:684.7px;width:7.4px;height:7.4px;background:#4a7ebb;box-shadow:0 0 0 1.2px rgba(255,255,255,.75);"></div>
<span style="left:1197.40px;top:680.94px;font-size:14.6px;color:#595959;transform:scaleX(1.034);">Product Revenue</span>
<div style="left:1183.6px;top:714.8px;width:7.4px;height:7.4px;background:#be4b48;box-shadow:0 0 0 1.2px rgba(255,255,255,.75);"></div>
<span style="left:1197.40px;top:711.04px;font-size:14.6px;color:#595959;">Services Revenue</span>
<div style="left:1183.6px;top:744.4px;width:7.4px;height:7.4px;background:#98b954;box-shadow:0 0 0 1.2px rgba(255,255,255,.75);"></div>
<span style="left:1197.40px;top:740.64px;font-size:14.6px;color:#595959;transform:scaleX(1.047);">Maintenance Revenue</span>
<div style="left:1183.6px;top:774.5px;width:7.4px;height:7.4px;background:#7d60a0;box-shadow:0 0 0 1.2px rgba(255,255,255,.75);"></div>
<span style="left:1197.40px;top:770.74px;font-size:14.6px;color:#595959;transform:scaleX(1.042);">Other Revenue</span>
</section>
<section class="pl-tables">
<div style="left:238px;top:821.5px;width:1130.1px;height:56px;background:#4e81bd;"></div>
<div style="left:1166px;top:905px;width:102px;height:28px;background:#ffc7ce;"></div>
<div style="left:864px;top:933px;width:102px;height:28px;background:#c6efce;"></div>
<div style="left:1166px;top:933px;width:102px;height:28px;background:#c6efce;"></div>
<div style="left:864px;top:961px;width:102px;height:29px;background:#ffc7ce;"></div>
<div style="left:864px;top:1025.3px;width:102px;height:26px;background:#c6efce;"></div>
<div style="left:1166px;top:1025.3px;width:102px;height:26px;background:#c6efce;"></div>
<div style="left:864px;top:1141.1px;width:102px;height:26.6px;background:#ffc7ce;"></div>
<div style="left:1166px;top:1141.1px;width:102px;height:26.6px;background:#ffc7ce;"></div>
<span style="left:688.43px;top:910.80px;font-size:18.9px;color:#383838;transform:scaleX(0.985);">730,880</span>
<span style="left:788.83px;top:910.80px;font-size:18.9px;color:#383838;transform:scaleX(0.985);">727,797</span>
<span style="left:910.33px;top:910.80px;font-size:18.9px;color:#383838;transform:scaleX(0.985);">3,083</span>
<span style="left:1021.52px;top:910.80px;font-size:18.9px;color:#383838;transform:scaleX(0.940);">0.4%</span>
<span style="left:1090.43px;top:910.80px;font-size:18.9px;color:#383838;transform:scaleX(0.985);">744,401</span>
<span style="left:1193.68px;top:910.80px;font-size:18.9px;color:#f0202a;transform:scaleX(0.985);">(13,521)</span>
<span style="left:1317.80px;top:910.80px;font-size:18.9px;color:#383838;transform:scaleX(0.940);">-1.8%</span>
<span style="left:688.43px;top:938.90px;font-size:18.9px;color:#383838;transform:scaleX(0.985);">540,925</span>
<span style="left:788.83px;top:938.90px;font-size:18.9px;color:#383838;transform:scaleX(0.985);">422,346</span>
<span style="left:891.01px;top:938.90px;font-size:18.9px;color:#0a6a12;transform:scaleX(0.985);">118,578</span>
<span style="left:1011.64px;top:938.90px;font-size:18.9px;color:#383838;transform:scaleX(0.940);">28.1%</span>
<span style="left:1090.43px;top:938.90px;font-size:18.9px;color:#383838;transform:scaleX(0.985);">421,463</span>
<span style="left:1193.01px;top:938.90px;font-size:18.9px;color:#0a6a12;transform:scaleX(0.985);">119,462</span>
<span style="left:1313.84px;top:938.90px;font-size:18.9px;color:#383838;transform:scaleX(0.940);">28.3%</span>
<span style="left:698.79px;top:967.00px;font-size:18.9px;color:#383838;transform:scaleX(0.985);">59,664</span>
<span style="left:799.19px;top:967.00px;font-size:18.9px;color:#383838;transform:scaleX(0.985);">81,610</span>
<span style="left:891.68px;top:967.00px;font-size:18.9px;color:#f0202a;transform:scaleX(0.985);">(21,946)</span>
<span style="left:1005.73px;top:967.00px;font-size:18.9px;color:#383838;transform:scaleX(0.940);">-26.9%</span>
<span style="left:1100.79px;top:967.00px;font-size:18.9px;color:#383838;transform:scaleX(0.985);">60,768</span>
<span style="left:1204.04px;top:967.00px;font-size:18.9px;color:#f0202a;transform:scaleX(0.985);">(1,104)</span>
<span style="left:1317.80px;top:967.00px;font-size:18.9px;color:#383838;transform:scaleX(0.940);">-1.8%</span>
<span style="left:698.79px;top:995.00px;font-size:18.9px;color:#383838;transform:scaleX(0.985);">31,677</span>
<span style="left:799.19px;top:995.00px;font-size:18.9px;color:#383838;transform:scaleX(0.985);">39,605</span>
<span style="left:902.04px;top:995.00px;font-size:18.9px;color:#f0202a;transform:scaleX(0.985);">(7,928)</span>
<span style="left:1005.73px;top:995.00px;font-size:18.9px;color:#383838;transform:scaleX(0.940);">-20.0%</span>
<span style="left:1100.79px;top:995.00px;font-size:18.9px;color:#383838;transform:scaleX(0.985);">40,601</span>
<span style="left:1204.04px;top:995.00px;font-size:18.9px;color:#f0202a;transform:scaleX(0.985);">(8,924)</span>
<span style="left:1307.93px;top:995.00px;font-size:18.9px;color:#383838;transform:scaleX(0.940);">-22.0%</span>
<span style="left:672.91px;top:1029.70px;font-size:18.9px;color:#151515;-webkit-text-stroke:0.42px #151515;transform:scaleX(0.985);">1,363,145</span>
<span style="left:773.31px;top:1029.70px;font-size:18.9px;color:#151515;-webkit-text-stroke:0.42px #151515;transform:scaleX(0.985);">1,271,357</span>
<span style="left:899.99px;top:1029.70px;font-size:18.9px;color:#0a6a12;-webkit-text-stroke:0.42px #0a6a12;transform:scaleX(0.985);">91,788</span>
<span style="left:1021.52px;top:1029.70px;font-size:18.9px;color:#151515;-webkit-text-stroke:0.42px #151515;transform:scaleX(0.940);">7.2%</span>
<span style="left:1074.91px;top:1029.70px;font-size:18.9px;color:#151515;-webkit-text-stroke:0.42px #151515;transform:scaleX(0.985);">1,267,233</span>
<span style="left:1201.99px;top:1029.70px;font-size:18.9px;color:#0a6a12;-webkit-text-stroke:0.42px #0a6a12;transform:scaleX(0.985);">95,912</span>
<span style="left:1323.72px;top:1029.70px;font-size:18.9px;color:#151515;-webkit-text-stroke:0.42px #151515;transform:scaleX(0.940);">7.6%</span>
<span style="left:688.43px;top:1102.60px;font-size:18.9px;color:#383838;transform:scaleX(0.985);">254,515</span>
<span style="left:788.83px;top:1102.60px;font-size:18.9px;color:#383838;transform:scaleX(0.985);">262,877</span>
<span style="left:910.33px;top:1102.60px;font-size:18.9px;color:#383838;transform:scaleX(0.985);">8,362</span>
<span style="left:1021.52px;top:1102.60px;font-size:18.9px;color:#383838;transform:scaleX(0.940);">3.2%</span>
<span style="left:1090.43px;top:1102.60px;font-size:18.9px;color:#383838;transform:scaleX(0.985);">246,880</span>
<span style="left:1204.04px;top:1102.60px;font-size:18.9px;color:#f0202a;transform:scaleX(0.985);">(7,635)</span>
<span style="left:1317.80px;top:1102.60px;font-size:18.9px;color:#383838;transform:scaleX(0.940);">-3.1%</span>
<span style="left:688.43px;top:1145.50px;font-size:18.9px;color:#151515;-webkit-text-stroke:0.42px #151515;transform:scaleX(0.985);">254,515</span>
<span style="left:788.83px;top:1145.50px;font-size:18.9px;color:#151515;-webkit-text-stroke:0.42px #151515;transform:scaleX(0.985);">262,877</span>
<span style="left:910.33px;top:1145.50px;font-size:18.9px;color:#c0101c;-webkit-text-stroke:0.42px #c0101c;transform:scaleX(0.985);">8,362</span>
<span style="left:1021.52px;top:1145.50px;font-size:18.9px;color:#151515;-webkit-text-stroke:0.42px #151515;transform:scaleX(0.940);">3.2%</span>
<span style="left:1090.43px;top:1145.50px;font-size:18.9px;color:#151515;-webkit-text-stroke:0.42px #151515;transform:scaleX(0.985);">246,880</span>
<span style="left:1204.04px;top:1145.50px;font-size:18.9px;color:#f0202a;-webkit-text-stroke:0.42px #f0202a;transform:scaleX(0.985);">(7,635)</span>
<span style="left:1317.80px;top:1145.50px;font-size:18.9px;color:#151515;-webkit-text-stroke:0.42px #151515;transform:scaleX(0.940);">-3.1%</span>
<span style="left:945.92px;top:826.62px;font-size:18.4px;color:#fff;font-weight:700;transform:scaleX(0.960);">September, 2021</span>
<span style="left:686.30px;top:854.22px;font-size:18.4px;color:#fff;font-weight:700;transform:scaleX(0.978);">Actual</span>
<span style="left:772.70px;top:854.22px;font-size:18.4px;color:#fff;font-weight:700;transform:scaleX(0.959);">Prior Year</span>
<span style="left:878.05px;top:854.22px;font-size:18.4px;color:#fff;font-weight:700;transform:scaleX(0.971);">Variance</span>
<span style="left:990.80px;top:854.22px;font-size:18.4px;color:#fff;font-weight:700;transform:scaleX(0.978);">Var %</span>
<span style="left:1085.45px;top:854.22px;font-size:18.4px;color:#fff;font-weight:700;transform:scaleX(0.955);">Budget</span>
<span style="left:1179.85px;top:854.22px;font-size:18.4px;color:#fff;font-weight:700;transform:scaleX(0.971);">Variance</span>
<span style="left:1280.65px;top:854.22px;font-size:18.4px;color:#fff;font-weight:700;transform:scaleX(0.971);">Variance</span>
<div style="left:1391px;top:821.5px;width:727.5px;height:56px;background:#4e81bd;"></div>
<div style="left:1607px;top:905px;width:101px;height:28px;background:#c6efce;"></div>
<div style="left:1916px;top:905px;width:102px;height:28px;background:#c6efce;"></div>
<div style="left:1607px;top:933px;width:101px;height:28px;background:#c6efce;"></div>
<div style="left:1916px;top:933px;width:102px;height:28px;background:#ffc7ce;"></div>
<div style="left:1607px;top:961px;width:101px;height:29px;background:#c6efce;"></div>
<div style="left:1916px;top:961px;width:102px;height:29px;background:#c6efce;"></div>
<div style="left:1607px;top:990px;width:101px;height:28px;background:#c6efce;"></div>
<div style="left:1916px;top:990px;width:102px;height:28px;background:#c6efce;"></div>
<div style="left:1607px;top:1025.3px;width:101px;height:26px;background:#c6efce;"></div>
<div style="left:1916px;top:1025.3px;width:102px;height:26px;background:#c6efce;"></div>
<div style="left:1607px;top:1097px;width:101px;height:28.5px;background:#ffc7ce;"></div>
<div style="left:1916px;top:1097px;width:102px;height:28.5px;background:#c6efce;"></div>
<div style="left:1607px;top:1141.1px;width:101px;height:26.6px;background:#ffc7ce;"></div>
<div style="left:1916px;top:1141.1px;width:102px;height:26.6px;background:#c6efce;"></div>
<span style="left:1405.71px;top:910.80px;font-size:18.9px;color:#383838;transform:scaleX(0.985);">7,562,564</span>
<span style="left:1515.91px;top:910.80px;font-size:18.9px;color:#383838;transform:scaleX(0.985);">6,787,593</span>
<span style="left:1632.63px;top:910.80px;font-size:18.9px;color:#0a6a12;transform:scaleX(0.985);">774,972</span>
<span style="left:1755.96px;top:910.80px;font-size:18.9px;color:#383838;transform:scaleX(0.940);">11.4%</span>
<span style="left:1825.51px;top:910.80px;font-size:18.9px;color:#383838;transform:scaleX(0.985);">7,247,727</span>
<span style="left:1942.43px;top:910.80px;font-size:18.9px;color:#0a6a12;transform:scaleX(0.985);">314,837</span>
<span style="left:2074.12px;top:910.80px;font-size:18.9px;color:#383838;transform:scaleX(0.940);">4.3%</span>
<span style="left:1405.71px;top:938.90px;font-size:18.9px;color:#383838;transform:scaleX(0.985);">4,096,731</span>
<span style="left:1515.91px;top:938.90px;font-size:18.9px;color:#383838;transform:scaleX(0.985);">3,721,661</span>
<span style="left:1632.63px;top:938.90px;font-size:18.9px;color:#0a6a12;transform:scaleX(0.985);">375,070</span>
<span style="left:1754.64px;top:938.90px;font-size:18.9px;color:#383838;transform:scaleX(0.940);">10.1%</span>
<span style="left:1825.51px;top:938.90px;font-size:18.9px;color:#383838;transform:scaleX(0.985);">4,406,947</span>
<span style="left:1934.14px;top:938.90px;font-size:18.9px;color:#f0202a;transform:scaleX(0.985);">(310,216)</span>
<span style="left:2068.20px;top:938.90px;font-size:18.9px;color:#383838;transform:scaleX(0.940);">-7.0%</span>
<span style="left:1421.23px;top:967.00px;font-size:18.9px;color:#383838;transform:scaleX(0.985);">745,818</span>
<span style="left:1531.43px;top:967.00px;font-size:18.9px;color:#383838;transform:scaleX(0.985);">695,474</span>
<span style="left:1642.99px;top:967.00px;font-size:18.9px;color:#0a6a12;transform:scaleX(0.985);">50,344</span>
<span style="left:1764.52px;top:967.00px;font-size:18.9px;color:#383838;transform:scaleX(0.940);">7.2%</span>
<span style="left:1841.03px;top:967.00px;font-size:18.9px;color:#383838;transform:scaleX(0.985);">652,557</span>
<span style="left:1952.79px;top:967.00px;font-size:18.9px;color:#0a6a12;transform:scaleX(0.985);">93,261</span>
<span style="left:2064.24px;top:967.00px;font-size:18.9px;color:#383838;transform:scaleX(0.940);">14.3%</span>
<span style="left:1421.23px;top:995.00px;font-size:18.9px;color:#383838;transform:scaleX(0.985);">363,792</span>
<span style="left:1531.43px;top:995.00px;font-size:18.9px;color:#383838;transform:scaleX(0.985);">351,960</span>
<span style="left:1644.36px;top:995.00px;font-size:18.9px;color:#0a6a12;transform:scaleX(0.985);">11,832</span>
<span style="left:1764.52px;top:995.00px;font-size:18.9px;color:#383838;transform:scaleX(0.940);">3.4%</span>
<span style="left:1841.03px;top:995.00px;font-size:18.9px;color:#383838;transform:scaleX(0.985);">335,236</span>
<span style="left:1952.79px;top:995.00px;font-size:18.9px;color:#0a6a12;transform:scaleX(0.985);">28,556</span>
<span style="left:2074.12px;top:995.00px;font-size:18.9px;color:#383838;transform:scaleX(0.940);">8.5%</span>
<span style="left:1395.37px;top:1029.70px;font-size:18.9px;color:#151515;-webkit-text-stroke:0.42px #151515;transform:scaleX(0.985);">12,768,904</span>
<span style="left:1506.94px;top:1029.70px;font-size:18.9px;color:#151515;-webkit-text-stroke:0.42px #151515;transform:scaleX(0.985);">11,556,687</span>
<span style="left:1617.11px;top:1029.70px;font-size:18.9px;color:#0a6a12;-webkit-text-stroke:0.42px #0a6a12;transform:scaleX(0.985);">1,212,218</span>
<span style="left:1754.64px;top:1029.70px;font-size:18.9px;color:#151515;-webkit-text-stroke:0.42px #151515;transform:scaleX(0.940);">10.5%</span>
<span style="left:1815.17px;top:1029.70px;font-size:18.9px;color:#151515;-webkit-text-stroke:0.42px #151515;transform:scaleX(0.985);">12,642,467</span>
<span style="left:1942.43px;top:1029.70px;font-size:18.9px;color:#0a6a12;-webkit-text-stroke:0.42px #0a6a12;transform:scaleX(0.985);">126,437</span>
<span style="left:2074.12px;top:1029.70px;font-size:18.9px;color:#151515;-webkit-text-stroke:0.42px #151515;transform:scaleX(0.940);">1.0%</span>
<span style="left:1405.71px;top:1102.60px;font-size:18.9px;color:#383838;transform:scaleX(0.985);">2,562,847</span>
<span style="left:1515.91px;top:1102.60px;font-size:18.9px;color:#383838;transform:scaleX(0.985);">2,384,143</span>
<span style="left:1624.34px;top:1102.60px;font-size:18.9px;color:#f0202a;transform:scaleX(0.985);">(178,705)</span>
<span style="left:1758.60px;top:1102.60px;font-size:18.9px;color:#383838;transform:scaleX(0.940);">-7.5%</span>
<span style="left:1825.51px;top:1102.60px;font-size:18.9px;color:#383838;transform:scaleX(0.985);">2,689,849</span>
<span style="left:1942.43px;top:1102.60px;font-size:18.9px;color:#0a6a12;transform:scaleX(0.985);">127,002</span>
<span style="left:2074.12px;top:1102.60px;font-size:18.9px;color:#383838;transform:scaleX(0.940);">4.7%</span>
<span style="left:1405.71px;top:1145.50px;font-size:18.9px;color:#151515;-webkit-text-stroke:0.42px #151515;transform:scaleX(0.985);">2,562,847</span>
<span style="left:1515.91px;top:1145.50px;font-size:18.9px;color:#151515;-webkit-text-stroke:0.42px #151515;transform:scaleX(0.985);">2,384,143</span>
<span style="left:1624.34px;top:1145.50px;font-size:18.9px;color:#f0202a;-webkit-text-stroke:0.42px #f0202a;transform:scaleX(0.985);">(178,705)</span>
<span style="left:1758.60px;top:1145.50px;font-size:18.9px;color:#151515;-webkit-text-stroke:0.42px #151515;transform:scaleX(0.940);">-7.5%</span>
<span style="left:1825.51px;top:1145.50px;font-size:18.9px;color:#151515;-webkit-text-stroke:0.42px #151515;transform:scaleX(0.985);">2,689,849</span>
<span style="left:1942.43px;top:1145.50px;font-size:18.9px;color:#0a6a12;-webkit-text-stroke:0.42px #0a6a12;transform:scaleX(0.985);">127,002</span>
<span style="left:2074.12px;top:1145.50px;font-size:18.9px;color:#151515;-webkit-text-stroke:0.42px #151515;transform:scaleX(0.940);">4.7%</span>
<span style="left:1700.70px;top:826.62px;font-size:18.4px;color:#fff;font-weight:700;transform:scaleX(0.960);">Year-To-Date</span>
<span style="left:1416.40px;top:854.22px;font-size:18.4px;color:#fff;font-weight:700;transform:scaleX(0.978);">Actual</span>
<span style="left:1510.40px;top:854.22px;font-size:18.4px;color:#fff;font-weight:700;transform:scaleX(0.959);">Prior Year</span>
<span style="left:1620.85px;top:854.22px;font-size:18.4px;color:#fff;font-weight:700;transform:scaleX(0.971);">Variance</span>
<span style="left:1733.80px;top:854.22px;font-size:18.4px;color:#fff;font-weight:700;transform:scaleX(0.978);">Var %</span>
<span style="left:1832.25px;top:854.22px;font-size:18.4px;color:#fff;font-weight:700;transform:scaleX(0.955);">Budget</span>
<span style="left:1930.55px;top:854.22px;font-size:18.4px;color:#fff;font-weight:700;transform:scaleX(0.971);">Variance</span>
<span style="left:2031.25px;top:854.22px;font-size:18.4px;color:#fff;font-weight:700;transform:scaleX(0.971);">Variance</span>
<span style="left:239.80px;top:854.62px;font-size:18.4px;color:#fff;font-weight:700;transform:scaleX(0.944);">Account Descriptions</span>
<span style="left:240.60px;top:882.70px;font-size:18.9px;color:#151515;-webkit-text-stroke:0.42px #151515;transform:scaleX(0.965);">Revenue</span>
<span style="left:269.60px;top:910.80px;font-size:18.9px;color:#383838;transform:scaleX(0.975);">40010 Product Revenue</span>
<span style="left:269.60px;top:938.90px;font-size:18.9px;color:#383838;transform:scaleX(0.954);">40020 Services Revenue</span>
<span style="left:269.60px;top:967.00px;font-size:18.9px;color:#383838;transform:scaleX(0.984);">40030 Maintenance Revenue</span>
<span style="left:269.60px;top:995.00px;font-size:18.9px;color:#383838;transform:scaleX(0.978);">40040 Other Revenue</span>
<span style="left:269.60px;top:1102.60px;font-size:18.9px;color:#383838;transform:scaleX(0.934);">50010 COGS - Product Sales</span>
<span style="left:240.60px;top:1029.70px;font-size:18.9px;color:#151515;-webkit-text-stroke:0.42px #151515;transform:scaleX(0.987);">Total Revenue</span>
<span style="left:240.60px;top:1074.40px;font-size:18.9px;color:#151515;-webkit-text-stroke:0.42px #151515;transform:scaleX(0.968);">Cost of Goods Sold</span>
<span style="left:240.60px;top:1145.50px;font-size:18.9px;color:#151515;-webkit-text-stroke:0.42px #151515;transform:scaleX(0.968);">Cost of Goods Sold</span>
<div style="left:237.75px;top:820.75px;width:1130.5px;height:1.5px;background:#151515;"></div>
<div style="left:238.5px;top:876.75px;width:1129px;height:1.5px;background:#151515;"></div>
<div style="left:663.5px;top:1023.75px;width:704px;height:1.5px;background:#151515;"></div>
<div style="left:237.75px;top:1051.75px;width:1129.75px;height:1.5px;background:#151515;"></div>
<div style="left:237.75px;top:1068.75px;width:1129.75px;height:1.5px;background:#151515;"></div>
<div style="left:663.5px;top:1139.75px;width:704px;height:1.5px;background:#151515;"></div>
<div style="left:237.75px;top:1167.75px;width:1129.75px;height:1.5px;background:#151515;"></div>
<div style="left:237.75px;top:821.5px;width:1.5px;height:231px;background:#151515;"></div>
<div style="left:237.75px;top:1069.5px;width:1.5px;height:99px;background:#151515;"></div>
<div style="left:662.75px;top:821.5px;width:1.5px;height:231px;background:#151515;"></div>
<div style="left:662.75px;top:1069.5px;width:1.5px;height:99px;background:#151515;"></div>
<div style="left:1366.75px;top:821.5px;width:1.5px;height:363.5px;background:#151515;"></div>
<div style="left:1390.75px;top:820.75px;width:728.5px;height:1.5px;background:#151515;"></div>
<div style="left:1391.5px;top:876.75px;width:727px;height:1.5px;background:#151515;"></div>
<div style="left:1391.5px;top:1023.75px;width:727px;height:1.5px;background:#151515;"></div>
<div style="left:1391.5px;top:1051.75px;width:727px;height:1.5px;background:#151515;"></div>
<div style="left:1391.5px;top:1068.75px;width:727px;height:1.5px;background:#151515;"></div>
<div style="left:1391.5px;top:1139.75px;width:727px;height:1.5px;background:#151515;"></div>
<div style="left:1391.5px;top:1167.75px;width:727px;height:1.5px;background:#151515;"></div>
<div style="left:1390.75px;top:821.5px;width:1.5px;height:363.5px;background:#151515;"></div>
<div style="left:2117.75px;top:821.5px;width:1.5px;height:363.5px;background:#151515;"></div>
</section>
<section class="sheet-tabs">
<div style="left:172.6px;top:1185px;width:2027.3px;height:38.8px;background:#e7e7e7;"></div>
<div style="left:172.6px;top:1185px;width:1997.6px;height:1.4px;background:#b3b3b3;"></div>
<svg style="left:206px;top:1197px" width="54" height="16" viewBox="0 0 54 16"><path d="M8.4 3.4 V12.4 L3.4 7.9Z M44 3.4 V12.4 L49 7.9Z" fill="#c6c6c6"/></svg>
<div style="left:311.4px;top:1185px;width:136.6px;height:34.2px;background:#fff;box-sizing:border-box;border:1.2px solid #b3b3b3;border-top:none;border-bottom:3px solid #217346;"></div>
<span style="left:330.20px;top:1193.21px;font-size:17px;color:#237a4e;font-weight:700;transform:scaleX(1.026);">PL Variance</span>
<div style="left:1350px;top:1200px;width:2.2px;height:2.2px;background:#b5b5b5;"></div>
<div style="left:1350px;top:1205px;width:2.2px;height:2.2px;background:#b5b5b5;"></div>
<div style="left:1350px;top:1210px;width:2.2px;height:2.2px;background:#b5b5b5;"></div>
<div style="left:1371.6px;top:1194.6px;width:797px;height:20px;background:#dcdcdc;"></div>
<div style="left:1371.6px;top:1194.6px;width:20px;height:20px;background:#fff;box-sizing:border-box;border:1.2px solid #b0b0b0;"></div>
<div style="left:1391px;top:1194.6px;width:343.8px;height:20px;background:#fff;box-sizing:border-box;border:1.2px solid #b0b0b0;"></div>
<div style="left:2148.2px;top:1194.6px;width:20.4px;height:20px;background:#fff;box-sizing:border-box;border:1.2px solid #b0b0b0;"></div>
<svg style="left:1371.6px;top:1194.6px" width="798" height="20" viewBox="0 0 798 20"><path d="M12.6 5.6 V14.4 L7.4 10Z M784.4 5.6 V14.4 L789.6 10Z" fill="#6a6a6a"/></svg>
<div style="left:2169.4px;top:267.4px;width:30.5px;height:917.8px;background:#dcdcdc;"></div>
<div style="left:2169.4px;top:267.4px;width:1.6px;height:917.8px;background:#a6a6a6;"></div>
<div style="left:2175.4px;top:268.2px;width:20px;height:19.6px;background:#fff;box-sizing:border-box;border:1.2px solid #b0b0b0;"></div>
<div style="left:2175.4px;top:288.6px;width:20px;height:173px;background:#fff;box-sizing:border-box;border:1.2px solid #b0b0b0;"></div>
<div style="left:2175.4px;top:1163.8px;width:20px;height:20.2px;background:#fff;box-sizing:border-box;border:1.2px solid #b0b0b0;"></div>
<svg style="left:2175.6px;top:268px" width="20" height="917" viewBox="0 0 20 917"><path d="M5.4 12.4 H14.6 L10 7.4Z M5.2 903.6 H14.4 L9.8 908.6Z" fill="#6a6a6a"/></svg>
</section>
</main>
</div>
<div id="fb"></div>
</body></html>
